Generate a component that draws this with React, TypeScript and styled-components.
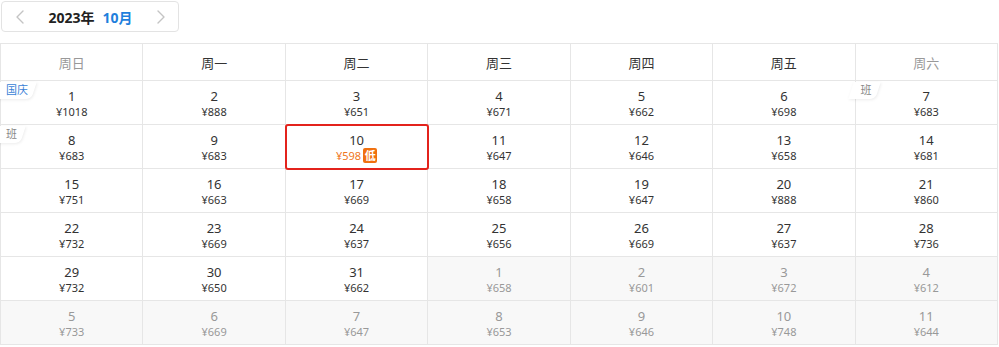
import styled, { createGlobalStyle } from 'styled-components';

const GlobalStyle = createGlobalStyle`
  html, body {
    margin: 0;
    padding: 0;
    background: #fff;
  }
  body {
    font-family: "Noto Sans", "Noto Sans CJK SC", sans-serif;
    color: #333;
  }
`;

const Page = styled.div`
  width: 999px;
  padding-top: 1px;
`;

const MonthBar = styled.div`
  width: 178px;
  height: 31px;
  box-sizing: border-box;
  border: 1px solid #e3e3e3;
  border-radius: 4px;
  display: flex;
  align-items: center;
  justify-content: space-between;
  padding: 0 13px 0 14px;
  margin-left: 1px;
`;

const Arrow = styled.span`
  display: flex;
  align-items: center;
  color: #c4c4c4;
`;

const MonthTitle = styled.div`
  display: flex;
  align-items: baseline;
  gap: 8px;
  font-size: 14px;
  font-weight: 700;
  color: #222;
`;

const MonthValue = styled.span`
  color: #1f7fdc;
`;

const Grid = styled.div`
  margin-top: 11px;
  width: 998px;
  display: grid;
  grid-template-columns: repeat(7, 1fr);
  border-top: 1px solid #e6e6e6;
  border-left: 1px solid #e6e6e6;
  box-sizing: border-box;
`;

const HeadCell = styled.div<{ $weekend: boolean }>`
  height: 36px;
  border-right: 1px solid #e6e6e6;
  border-bottom: 1px solid #e6e6e6;
  display: flex;
  align-items: center;
  justify-content: center;
  font-size: 13px;
  font-weight: 400;
  color: ${(p) => (p.$weekend ? '#999' : '#333')};
`;

const DayCell = styled.div<{ $other: boolean; $selected: boolean }>`
  position: relative;
  z-index: ${(p) => (p.$selected ? 1 : 0)};
  height: 44px;
  border-right: 1px solid #e6e6e6;
  border-bottom: 1px solid #e6e6e6;
  background: ${(p) => (p.$other ? '#f8f8f8' : '#fff')};
  color: ${(p) => (p.$other ? '#999' : '#333')};
  display: flex;
  flex-direction: column;
  align-items: center;
  justify-content: center;
  padding-top: 1px;
  box-sizing: border-box;

  &::after {
    content: '';
    display: ${(p) => (p.$selected ? 'block' : 'none')};
    position: absolute;
    inset: -1px -2px -2px -1px;
    border: 2px solid #e3231c;
    border-radius: 3px;
  }
`;

const DayNum = styled.div`
  font-size: 13px;
  line-height: 16px;
`;

const Price = styled.div<{ $low: boolean }>`
  display: flex;
  align-items: center;
  gap: 2px;
  font-size: 11px;
  line-height: 15px;
  color: ${(p) => (p.$low ? '#f0761c' : 'inherit')};
`;

const LowBadge = styled.span`
  display: inline-flex;
  align-items: center;
  justify-content: center;
  width: 14px;
  height: 15px;
  border-radius: 2px;
  background: #f0700f;
  color: #fff;
  font-size: 11px;
  font-weight: 700;
  line-height: 1;
`;

const Tag = styled.span<{ $holiday: boolean }>`
  position: absolute;
  top: 1px;
  left: 1px;
  padding: 1px 8px 2px 4px;
  font-size: 11px;
  line-height: 14px;
  color: ${(p) => (p.$holiday ? '#3a7fd6' : '#888')};
  z-index: 0;

  &::before {
    content: '';
    position: absolute;
    inset: 0 2px 0 -6px;
    background: #fff;
    transform: skewX(-18deg);
    border-radius: 0 0 5px 0;
    box-shadow: 1px 1px 3px rgba(0, 0, 0, 0.08);
    z-index: -1;
  }
`;

type Day = {
  day: number;
  price: number;
  other?: boolean;
  tag?: string;
  low?: boolean;
};

const weekDays = ['周日', '周一', '周二', '周三', '周四', '周五', '周六'];

const days: Day[] = [
  { day: 1, price: 1018, tag: '国庆' },
  { day: 2, price: 888 },
  { day: 3, price: 651 },
  { day: 4, price: 671 },
  { day: 5, price: 662 },
  { day: 6, price: 698 },
  { day: 7, price: 683, tag: '班' },
  { day: 8, price: 683, tag: '班' },
  { day: 9, price: 683 },
  { day: 10, price: 598, low: true },
  { day: 11, price: 647 },
  { day: 12, price: 646 },
  { day: 13, price: 658 },
  { day: 14, price: 681 },
  { day: 15, price: 751 },
  { day: 16, price: 663 },
  { day: 17, price: 669 },
  { day: 18, price: 658 },
  { day: 19, price: 647 },
  { day: 20, price: 888 },
  { day: 21, price: 860 },
  { day: 22, price: 732 },
  { day: 23, price: 669 },
  { day: 24, price: 637 },
  { day: 25, price: 656 },
  { day: 26, price: 669 },
  { day: 27, price: 637 },
  { day: 28, price: 736 },
  { day: 29, price: 732 },
  { day: 30, price: 650 },
  { day: 31, price: 662 },
  { day: 1, price: 658, other: true },
  { day: 2, price: 601, other: true },
  { day: 3, price: 672, other: true },
  { day: 4, price: 612, other: true },
  { day: 5, price: 733, other: true },
  { day: 6, price: 669, other: true },
  { day: 7, price: 647, other: true },
  { day: 8, price: 653, other: true },
  { day: 9, price: 646, other: true },
  { day: 10, price: 748, other: true },
  { day: 11, price: 644, other: true },
];

function Chevron({ dir }: { dir: 'left' | 'right' }) {
  return (
    <svg width="8" height="14" viewBox="0 0 8 14" fill="none">
      <path
        d={dir === 'left' ? 'M7 1L1 7l6 6' : 'M1 1l6 6-6 6'}
        stroke="currentColor"
        strokeWidth="1.4"
        strokeLinecap="round"
        strokeLinejoin="round"
      />
    </svg>
  );
}

function App() {
  return (
    <Page>
      <GlobalStyle />
      <MonthBar>
        <Arrow>
          <Chevron dir="left" />
        </Arrow>
        <MonthTitle>
          <span>2023年</span>
          <MonthValue>10月</MonthValue>
        </MonthTitle>
        <Arrow>
          <Chevron dir="right" />
        </Arrow>
      </MonthBar>
      <Grid>
        {weekDays.map((w, i) => (
          <HeadCell key={w} $weekend={i === 0 || i === 6}>
            {w}
          </HeadCell>
        ))}
        {days.map((d, i) => (
          <DayCell key={i} $other={!!d.other} $selected={!!d.low}>
            {d.tag && <Tag $holiday={d.tag === '国庆'}>{d.tag}</Tag>}
            <DayNum>{d.day}</DayNum>
            <Price $low={!!d.low}>
              ¥{d.price}
              {d.low && <LowBadge>低</LowBadge>}
            </Price>
          </DayCell>
        ))}
      </Grid>
    </Page>
  );
}

export default App;
